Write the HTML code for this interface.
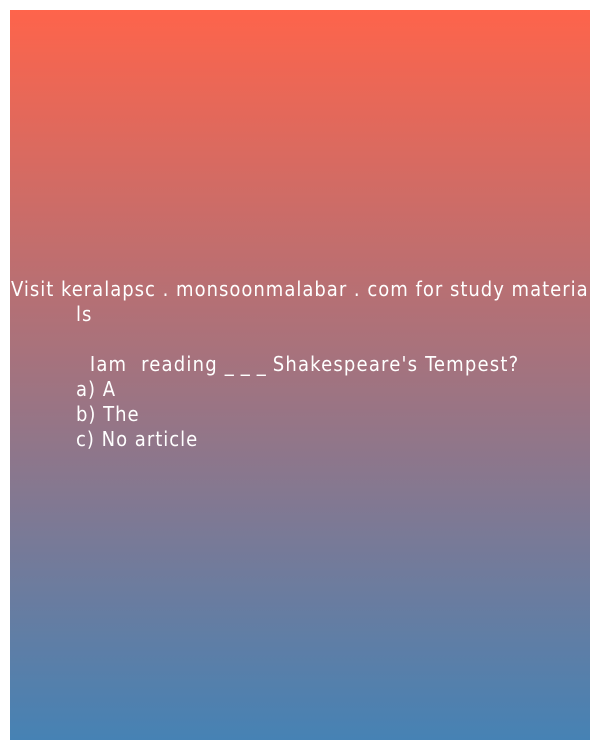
<!DOCTYPE html>
<html><head><style>
html,body{margin:0;padding:0;background:#fff;width:600px;height:750px;overflow:hidden}
.box{position:absolute;left:10px;top:10px;width:580px;height:730px;background:linear-gradient(#fe644b,#4682b4)}
.t{position:absolute;color:#fff;font-family:"DejaVu Sans Condensed","DejaVu Sans","Liberation Sans",sans-serif;font-stretch:condensed;font-size:20px;line-height:25px;white-space:pre;letter-spacing:1px}
</style></head><body>
<div class="box"></div>
<div class="t" style="left:11px;top:277px">Visit keralapsc . monsoonmalabar . com for study materia</div>
<div class="t" style="left:76px;top:302px">ls</div>
<div class="t" style="left:76px;top:352px;letter-spacing:1.2px">  Iam  reading <span style="letter-spacing:7px">___</span>Shakespeare's Tempest?</div>
<div class="t" style="left:76px;top:377px">a) A</div>
<div class="t" style="left:76px;top:402px">b) The</div>
<div class="t" style="left:76px;top:427px">c) No article</div>
</body></html>
